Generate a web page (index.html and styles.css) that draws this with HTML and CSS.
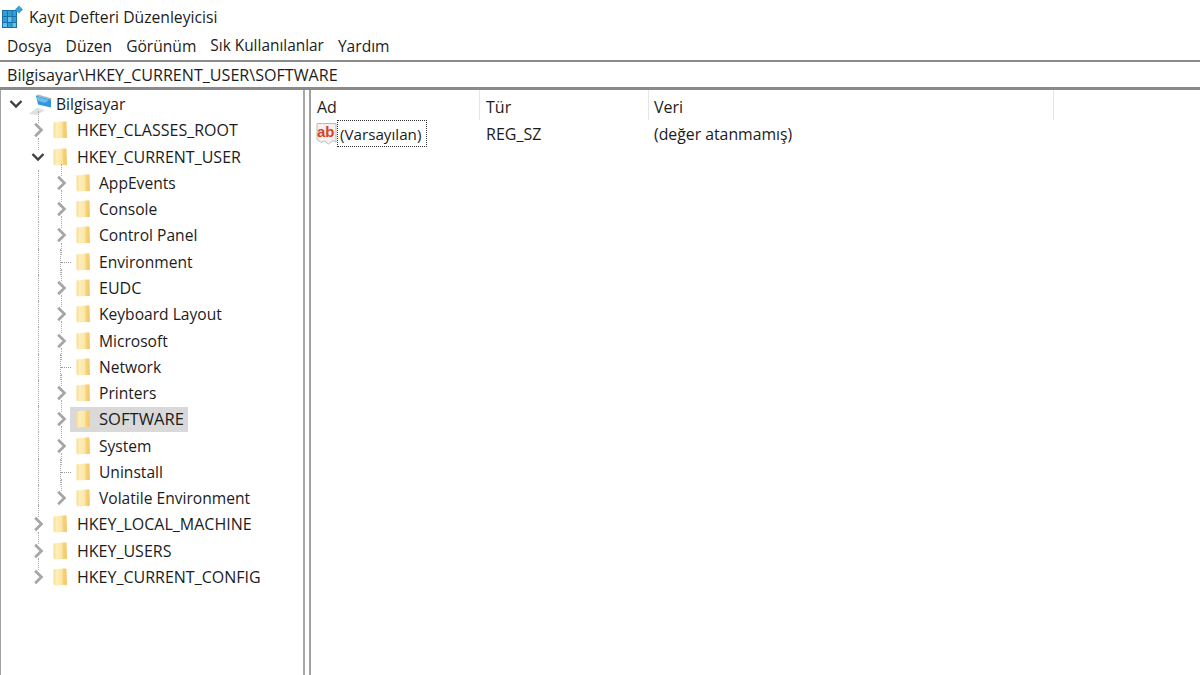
FILE: index.html
```html
<!DOCTYPE html>
<html lang="tr">
<head>
<meta charset="utf-8">
<title>Kayıt Defteri Düzenleyicisi</title>
<link rel="stylesheet" href="styles.css">
</head>
<body>
<svg class="defs" width="0" height="0" aria-hidden="true">
  <defs>
    <linearGradient id="fold" x1="0" y1="0" x2="1" y2="0">
      <stop offset="0" stop-color="#f9dc8c"/>
      <stop offset="0.22" stop-color="#fdeebd"/>
      <stop offset="0.62" stop-color="#fbe6a4"/>
      <stop offset="0.72" stop-color="#f6d27a"/>
      <stop offset="1" stop-color="#f3c968"/>
    </linearGradient>
    <symbol id="folder" viewBox="0 0 16 18">
      <path d="M0.5 1.5 L9 0.5 L13.5 0.5 L14 17 L9 17 L2.5 17.5 L0.5 16.5 Z" fill="url(#fold)"/>
    </symbol>
    <symbol id="closed" viewBox="0 0 12 14">
      <path d="M3.5 1.5 L9 7 L3.5 12.5" fill="none" stroke="#a6a6a6" stroke-width="2.4"/>
    </symbol>
    <symbol id="open" viewBox="0 0 14 12">
      <path d="M1.5 3 L7 8.5 L12.5 3" fill="none" stroke="#3f3f3f" stroke-width="2.4"/>
    </symbol>
  </defs>
</svg>

<header class="titlebar">
  <svg class="appicon" width="24" height="24" viewBox="0 0 24 24" aria-hidden="true">
    <path d="M1 5 H16 V23 H1 Z" fill="#1a6fa8"/>
    <path d="M2 6 H6 V11 H2 Z M7 6 H10.5 V11 H7 Z M11.5 6 H15 V11 H11.5 Z M2 12 H6 V17 H2 Z M7 12 H10.5 V17 H7 Z M11.5 12 H15 V17 H11.5 Z M2 18 H6 V22 H2 Z M7 18 H10.5 V22 H7 Z M11.5 18 H15 V22 H11.5 Z" fill="#2f9fd6"/>
    <path d="M7 12 H10.5 V17 H7 Z M2 18 H6 V22 H2 Z M11.5 18 H15 V22 H11.5 Z" fill="#62c3ea"/>
    <path d="M18 0.5 L22 4.5 L18 8.5 L14 4.5 Z" fill="#3d9fd3"/>
  </svg>
  <span class="titletext">Kayıt Defteri Düzenleyicisi</span>
</header>

<nav class="menubar">
  <span>Dosya</span><span>Düzen</span><span>Görünüm</span><span class="fav">Sık Kullanılanlar</span><span>Yardım</span>
</nav>

<div class="address">Bilgisayar\HKEY_CURRENT_USER\SOFTWARE</div>

<main class="panes">
  <section class="tree">
    <div class="row lvl0">
      <svg class="tw tw-open" aria-hidden="true"><use href="#open"/></svg>
      <svg class="pc" width="26" height="24" viewBox="0 0 26 24" aria-hidden="true">
        <path d="M0 22 L8 15.5 L16 18 L8 23 Z" fill="#dfe2e5"/>
        <path d="M7 3.5 L22 7.5 L22 15.5 L9 12.5 Z" fill="#2f97df"/>
        <path d="M7.5 4.5 L20 8 L16 11 L9 9 Z" fill="#6cbfea"/>
        <path d="M7 3.5 L9 2.5 L23 6.5 L22 7.5 Z" fill="#a8b4bc"/>
      </svg>
      <span class="label">Bilgisayar</span>
    </div>
    <div class="row lvl1"><svg class="tw" aria-hidden="true"><use href="#closed"/></svg><svg class="fd" aria-hidden="true"><use href="#folder"/></svg><span class="label caps">HKEY_CLASSES_ROOT</span></div>
    <div class="row lvl1"><svg class="tw tw-open" aria-hidden="true"><use href="#open"/></svg><svg class="fd" aria-hidden="true"><use href="#folder"/></svg><span class="label caps">HKEY_CURRENT_USER</span></div>
    <div class="row lvl2"><svg class="tw" aria-hidden="true"><use href="#closed"/></svg><svg class="fd" aria-hidden="true"><use href="#folder"/></svg><span class="label">AppEvents</span></div>
    <div class="row lvl2"><svg class="tw" aria-hidden="true"><use href="#closed"/></svg><svg class="fd" aria-hidden="true"><use href="#folder"/></svg><span class="label">Console</span></div>
    <div class="row lvl2"><svg class="tw" aria-hidden="true"><use href="#closed"/></svg><svg class="fd" aria-hidden="true"><use href="#folder"/></svg><span class="label">Control Panel</span></div>
    <div class="row lvl2"><span class="tw dash"></span><svg class="fd" aria-hidden="true"><use href="#folder"/></svg><span class="label">Environment</span></div>
    <div class="row lvl2"><svg class="tw" aria-hidden="true"><use href="#closed"/></svg><svg class="fd" aria-hidden="true"><use href="#folder"/></svg><span class="label caps">EUDC</span></div>
    <div class="row lvl2"><svg class="tw" aria-hidden="true"><use href="#closed"/></svg><svg class="fd" aria-hidden="true"><use href="#folder"/></svg><span class="label">Keyboard Layout</span></div>
    <div class="row lvl2"><svg class="tw" aria-hidden="true"><use href="#closed"/></svg><svg class="fd" aria-hidden="true"><use href="#folder"/></svg><span class="label">Microsoft</span></div>
    <div class="row lvl2"><span class="tw dash"></span><svg class="fd" aria-hidden="true"><use href="#folder"/></svg><span class="label">Network</span></div>
    <div class="row lvl2"><svg class="tw" aria-hidden="true"><use href="#closed"/></svg><svg class="fd" aria-hidden="true"><use href="#folder"/></svg><span class="label">Printers</span></div>
    <div class="row lvl2"><svg class="tw" aria-hidden="true"><use href="#closed"/></svg><span class="selected"><svg class="fd" aria-hidden="true"><use href="#folder"/></svg><span class="label">SOFTWARE</span></span></div>
    <div class="row lvl2"><svg class="tw" aria-hidden="true"><use href="#closed"/></svg><svg class="fd" aria-hidden="true"><use href="#folder"/></svg><span class="label">System</span></div>
    <div class="row lvl2"><span class="tw dash"></span><svg class="fd" aria-hidden="true"><use href="#folder"/></svg><span class="label">Uninstall</span></div>
    <div class="row lvl2"><svg class="tw" aria-hidden="true"><use href="#closed"/></svg><svg class="fd" aria-hidden="true"><use href="#folder"/></svg><span class="label">Volatile Environment</span></div>
    <div class="row lvl1"><svg class="tw" aria-hidden="true"><use href="#closed"/></svg><svg class="fd" aria-hidden="true"><use href="#folder"/></svg><span class="label caps">HKEY_LOCAL_MACHINE</span></div>
    <div class="row lvl1"><svg class="tw" aria-hidden="true"><use href="#closed"/></svg><svg class="fd" aria-hidden="true"><use href="#folder"/></svg><span class="label caps">HKEY_USERS</span></div>
    <div class="row lvl1"><svg class="tw" aria-hidden="true"><use href="#closed"/></svg><svg class="fd" aria-hidden="true"><use href="#folder"/></svg><span class="label caps">HKEY_CURRENT_CONFIG</span></div>
  </section>
  <section class="list">
    <div class="cols head">
      <div class="c-name">Ad</div>
      <div class="c-type">Tür</div>
      <div class="c-data">Veri</div>
    </div>
    <div class="cols entry">
      <div class="c-name name-cell">
        <svg class="ab" width="24" height="24" viewBox="0 0 24 24" aria-hidden="true">
          <path d="M1 1.5 H20 V20 L17 18.5 L12.5 22 L8.5 19 L5.5 20.5 L1 17.5 Z" fill="#f4f2ee" stroke="#b9bbbd"/>
          <text x="1" y="14.5" class="abtext">ab</text>
        </svg>
        <span class="focus">(Varsayılan)</span>
      </div>
      <div class="c-type">REG_SZ</div>
      <div class="c-data">(değer atanmamış)</div>
    </div>
  </section>
</main>
</body>
</html>
```
FILE: styles.css
```css
* { box-sizing: border-box; }
html, body { margin: 0; height: 675px; overflow: hidden; background: #fff; }
body {
  font-family: "Open Sans", "Noto Sans", "Liberation Sans", sans-serif;
  font-size: 16px;
  color: #1c1c1c;
  display: flex;
  flex-direction: column;
}
.defs { position: absolute; }
.titlebar { height: 33px; display: flex; align-items: center; padding-left: 1px; gap: 4px; flex: none; }
.titletext { font-size: 15.7px; }
.menubar { height: 27px; display: flex; align-items: center; padding: 0 0 2px 7px; gap: 14px; flex: none; font-size: 15.6px; }
.fav { font-size: 15.4px; }
.address {
  height: 30px; flex: none; padding: 1px 0 0 7px; display: flex; align-items: center;
  border-top: 2px solid #8a8a8a; border-bottom: 3px solid #8a8a8a; font-size: 16.1px;
}
.panes { flex: 1; display: flex; min-height: 0; }
.tree {
  width: 311px; flex: none; padding-top: 1px;
  border-left: 1px solid #a0a0a0;
  border-right: 2px solid #a0a0a0;
  position: relative;
}
.tree::after { content: ""; position: absolute; top: 0; bottom: 0; right: 4px; width: 2px; background: #a8a8a8; }
.row { height: 26.28px; display: flex; align-items: center; white-space: nowrap; position: relative; }
.lvl0 { padding-left: 8px; }
.lvl1 { padding-left: 30px; }
.lvl2 { padding-left: 53px; }
.lvl1::before { content: ""; position: absolute; left: 37px; top: -6px; height: 12px; border-left: 1px dotted #aaa; }
.lvl2::before { content: ""; position: absolute; left: 37px; top: 0; bottom: 0; border-left: 1px dotted #aaa; }
.lvl2::after { content: ""; position: absolute; left: 60px; top: -6px; height: 12px; border-left: 1px dotted #aaa; }
.tw { width: 14px; height: 16px; flex: none; margin-right: 8px; }
.tw-open { height: 14px; }
.dash { position: relative; }
.dash::before { content: ""; position: absolute; left: 7px; top: 8px; width: 10px; border-top: 1px dotted #999; }
.dash::after { content: ""; position: absolute; left: 6px; top: -5px; height: 26px; border-left: 1px dotted #aaa; }
.fd { width: 16px; height: 18px; flex: none; margin-right: 8px; }
.lvl2 .fd { margin-right: 7px; }
.pc { flex: none; margin: 0 1px 0 -2px; }
.label { font-size: 15.6px; line-height: 20px; }
.caps { font-size: 16px; }
.selected { display: flex; align-items: center; background: #d9d9d9; height: 25px; margin-left: -6px; padding-left: 6px; padding-right: 4px; }
.selected .label { font-size: 16.6px; }
.list { flex: 1; min-width: 0; }
.cols { display: flex; align-items: center; }
.head { height: 30px; }
.head > div { height: 30px; padding-top: 3px; display: flex; align-items: center; padding-left: 6px; border-right: 1px solid #e5e5e5; }
.c-name { width: 169px; flex: none; }
.c-type { width: 169px; flex: none; }
.c-data { width: 405px; flex: none; }
.head .c-data { padding-left: 5px; }
.entry { height: 27px; }
.entry .c-type { padding-left: 6px; }
.entry .c-data { padding-left: 5px; font-size: 15.8px; }
.name-cell { display: flex; align-items: center; padding-left: 5px; }
.ab { flex: none; }
.focus { border: 1px dotted #333; height: 27px; padding: 0 5px 0 2px; display: flex; align-items: center; font-size: 15.2px; margin-left: -3px; }
.abtext { font-family: "Liberation Sans", sans-serif; font-size: 15px; font-weight: 700; fill: #d8432a; }
```
